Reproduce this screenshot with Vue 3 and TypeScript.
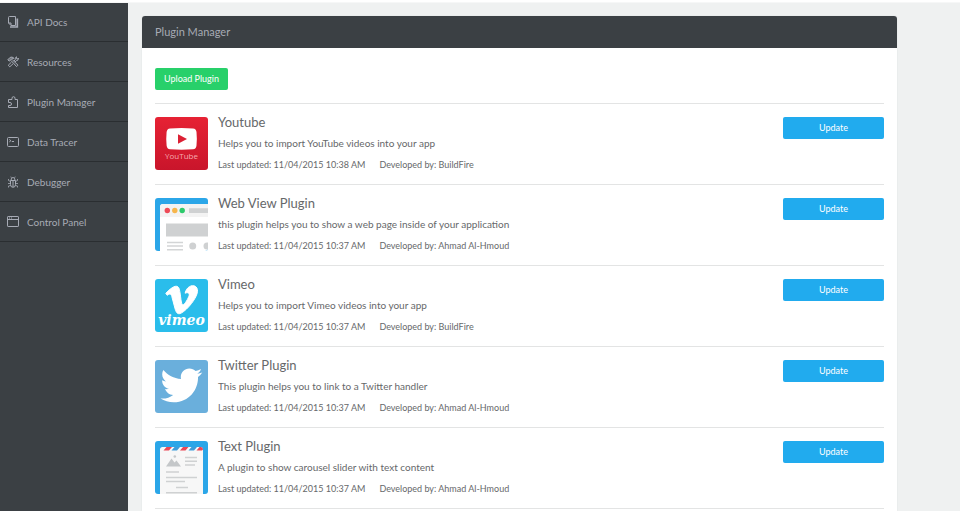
<script setup lang="ts">
type MenuIcon = 'docs' | 'tools' | 'puzzle' | 'terminal' | 'bug' | 'window'
type PluginIcon = 'youtube' | 'web' | 'vimeo' | 'twitter' | 'text'

interface MenuItem {
  label: string
  icon: MenuIcon
}

interface Plugin {
  name: string
  description: string
  updated: string
  author: string
  icon: PluginIcon
}

const menu: MenuItem[] = [
  { label: 'API Docs', icon: 'docs' },
  { label: 'Resources', icon: 'tools' },
  { label: 'Plugin Manager', icon: 'puzzle' },
  { label: 'Data Tracer', icon: 'terminal' },
  { label: 'Debugger', icon: 'bug' },
  { label: 'Control Panel', icon: 'window' },
]

const plugins: Plugin[] = [
  { name: 'Youtube', description: 'Helps you to import YouTube videos into your app', updated: '11/04/2015 10:38 AM', author: 'BuildFire', icon: 'youtube' },
  { name: 'Web View Plugin', description: 'this plugin helps you to show a web page inside of your application', updated: '11/04/2015 10:37 AM', author: 'Ahmad Al-Hmoud', icon: 'web' },
  { name: 'Vimeo', description: 'Helps you to import Vimeo videos into your app', updated: '11/04/2015 10:37 AM', author: 'BuildFire', icon: 'vimeo' },
  { name: 'Twitter Plugin', description: 'This plugin helps you to link to a Twitter handler', updated: '11/04/2015 10:37 AM', author: 'Ahmad Al-Hmoud', icon: 'twitter' },
  { name: 'Text Plugin', description: 'A plugin to show carousel slider with text content', updated: '11/04/2015 10:37 AM', author: 'Ahmad Al-Hmoud', icon: 'text' },
]
</script>

<template>
  <div class="page">
    <div class="topbar"></div>
    <div class="layout">
      <nav class="sidebar">
        <a v-for="item in menu" :key="item.label" href="#" class="menu-item">
          <svg class="menu-icon" viewBox="0 0 12 12" aria-hidden="true">
            <template v-if="item.icon === 'docs'">
              <path d="M3 11 H10.3 V2.500" stroke-width="1.700" />
              <path d="M2.500 .5 H8.500 V9.500 H4 L1.500 7 V1.500 Q1.500 .5 2.500 .5 Z M1.500 7 H4 V9.500" />
            </template>
            <template v-else-if="item.icon === 'tools'">
              <path d="M4 4.500 L9.600 10.600 L11 9.200 L5.200 3.600 M6.800 5.200 L8.200 3.800 Q7.500 1.800 9.500 .8 L9.300 2.600 L10.600 3 L11.400 2 Q11.600 4.800 9.200 4.800 L7.900 6.200 M4.400 6.200 L1.200 9.300 L2.800 10.800 L6 7.800" />
              <path d="M.8 3.800 L2.200 5.100 L5.800 2.200 L6.900 2.300 Q5.200 .3 3.100 1.400 Z" fill="#a7abb5" fill-opacity=".5" />
            </template>
            <template v-else-if="item.icon === 'puzzle'">
              <path d="M1.500 3.500 H5 V2.200 A1.500 1.500 0 0 1 8 2.200 V3.500 H10.500 V11.500 H1.500 V9.500 H3 A1.500 1.500 0 0 0 3 6.500 H1.500 Z" />
            </template>
            <template v-else-if="item.icon === 'terminal'">
              <rect x=".5" y="1.500" width="11" height="9" rx="1" />
              <path d="M2.300 3.500 L3.900 4.700 L2.300 5.900 M4.800 5.500 H7" />
            </template>
            <template v-else-if="item.icon === 'bug'">
              <path d="M3.500 4.500 H8.500 V8.500 Q8.500 11.300 6 11.300 Q3.500 11.300 3.500 8.500 Z M4 4.300 Q4 1.500 6 1.500 Q8 1.500 8 4.300 M6 5 V11" />
              <path d="M4.400 1.800 L3.800 .6 M7.600 1.800 L8.200 .6 M3.500 5.500 L1.500 4.500 V3 M8.500 5.500 L10.500 4.500 V3 M3.500 7.500 H1 M8.500 7.500 H11 M3.700 9.500 L1.500 10 V11.500 M8.300 9.500 L10.500 10 V11.500" stroke-width=".8" />
            </template>
            <template v-else>
              <rect x=".5" y=".5" width="11" height="10" rx=".6" />
              <path d="M.5 3.500 H11.500 M2 2 H3 M4 2 H5" />
            </template>
          </svg>
          <span>{{ item.label }}</span>
        </a>
      </nav>

      <main class="content">
        <section class="card">
          <h1 class="card-header">Plugin Manager</h1>
          <div class="card-body">
            <button type="button" class="btn upload">Upload Plugin</button>
            <ul class="plugins">
              <li v-for="plugin in plugins" :key="plugin.name" class="plugin">
                <svg class="plugin-icon" viewBox="0 0 53 53" aria-hidden="true">
                  <template v-if="plugin.icon === 'youtube'">
                    <defs>
                      <linearGradient id="yt-red" x1="0" y1="0" x2="0" y2="1">
                        <stop offset="0" stop-color="#e62234" />
                        <stop offset="1" stop-color="#c9152b" />
                      </linearGradient>
                    </defs>
                    <rect width="53" height="53" fill="url(#yt-red)" />
                    <path d="M15 11.4 Q26.500 10.600 38 11.400 Q41.200 11.700 41.500 15 Q42.200 22 41.500 28.500 Q41.200 32 38 32.300 Q26.500 33.200 15 32.300 Q12 32 11.600 28.500 Q10.900 22 11.600 15 Q12 11.700 15 11.400 Z" fill="#fff" />
                    <path d="M23 17.200 L32 22 L23 26.800 Z" fill="#dc2034" />
                    <text x="26.500" y="42" class="yt-word">YouTube</text>
                  </template>
                  <template v-else-if="plugin.icon === 'web'">
                    <rect width="53" height="53" fill="#2ba6e8" />
                    <path d="M5 53 V9 Q5 6 8 6 H53 V53 Z" fill="#fff" />
                    <path d="M5 19 V9 Q5 6 8 6 H53 V19 Z" fill="#f3f3f3" />
                    <circle cx="12.300" cy="12.500" r="2.700" fill="#ee4b58" />
                    <circle cx="19.800" cy="12.500" r="2.700" fill="#f7b64c" />
                    <circle cx="27.200" cy="12.500" r="2.700" fill="#2dca6c" />
                    <path d="M34 10.300 H53 V15 H34 Z M11 25.500 H53 V38.500 H11 Z" fill="#cfd1d2" />
                    <path d="M12 44.500 H28 M12 48 H28 M12 51.700 H28" stroke="#d3d5d6" stroke-width="1.500" />
                    <circle cx="37.700" cy="48" r="3.500" fill="#cfd1d2" />
                    <circle cx="52" cy="48" r="3.500" fill="#cfd1d2" />
                  </template>
                  <template v-else-if="plugin.icon === 'vimeo'">
                    <rect width="53" height="53" fill="#2abdeb" />
                    <path d="M10.800 14.300 L12.200 16.300 C14.500 14.700 15.800 14.400 16.800 17.500 L20.200 30.200 C21.400 34.300 23.200 35.700 26.200 34.100 C32.400 30.900 42.200 18.700 42.500 12.300 C42.900 4.300 32.200 4.700 30.100 14.200 C33.500 12.800 35.100 14.600 33.700 17.700 C32.200 21.200 29.100 26.600 27.500 25.700 C25.700 24.600 25.500 11.600 23.700 8.700 C21.700 5.500 17 7.700 10.800 14.300 Z" fill="#fff" stroke="#fff" />
                    <text x="26.500" y="46" class="vimeo-word">vimeo</text>
                  </template>
                  <template v-else-if="plugin.icon === 'twitter'">
                    <rect width="53" height="53" fill="#6aafdc" />
                    <g transform="translate(5.500 4.500) scale(1.740)">
                      <path d="M23.954 4.569c-.885.389-1.830.654-2.825.775 1.014-.611 1.794-1.574 2.163-2.723-.951.555-2.005.959-3.127 1.184-.896-.959-2.173-1.559-3.591-1.559-2.717 0-4.920 2.203-4.920 4.917 0 .390.045.765.127 1.124C7.691 8.094 4.066 6.130 1.640 3.161c-.427.722-.666 1.561-.666 2.475 0 1.710.870 3.213 2.188 4.096-.807-.026-1.566-.248-2.228-.616v.061c0 2.385 1.693 4.374 3.946 4.827-.413.111-.849.171-1.296.171-.314 0-.615-.030-.916-.086.631 1.953 2.445 3.377 4.604 3.417-1.680 1.319-3.809 2.105-6.102 2.105-.390 0-.779-.023-1.170-.067 2.189 1.394 4.768 2.209 7.557 2.209 9.054 0 13.999-7.496 13.999-13.986 0-.209 0-.420-.015-.630.961-.689 1.800-1.560 2.460-2.548z" fill="#fff" />
                    </g>
                  </template>
                  <template v-else>
                    <rect width="53" height="53" fill="#2ba6e8" />
                    <path d="M5 53 V8.500 Q5 6 7.500 6 H45.500 Q48 6 48 8.500 V53 Z" fill="#f7f7f7" />
                    <path d="M11.500 6 H17 L14 9.500 H8.500 Z M28 6 H33.500 L30.500 9.500 H25 Z M44.500 6 H45.500 Q48 6 48 8.500 L47 9.500 H41.500 Z" fill="#eb4856" />
                    <path d="M19.500 6 H25 L22 9.500 H16.500 Z M36.500 6 H42 L39 9.500 H33.500 Z" fill="#3d9ddb" />
                    <path d="M11 25.500 L16.500 17.500 L19.500 21.500 L21.500 19.500 L26 25.500 Z" fill="#c4c7c9" />
                    <circle cx="19.800" cy="15.500" r="1.300" fill="#c4c7c9" />
                    <path d="M30 16.500 H42 M30 20.200 H42 M30 24 H40 M11 31 H24 M11 36.500 H42 M11 40.500 H30 M21 46.500 H33 M11 51.700 H42" stroke="#cfd1d2" stroke-width="1.600" />
                  </template>
                </svg>
                <div class="info">
                  <h2 class="name">{{ plugin.name }}</h2>
                  <p class="description">{{ plugin.description }}</p>
                  <p class="meta">
                    <span>Last updated: {{ plugin.updated }}</span>
                    <span>Developed by: {{ plugin.author }}</span>
                  </p>
                </div>
                <button type="button" class="btn update">Update</button>
              </li>
            </ul>
          </div>
        </section>
      </main>
    </div>
  </div>
</template>

<style>
body {
  margin: 0;
  background: #eff1f1;
}
</style>

<style scoped>
.page {
  display: flex;
  flex-direction: column;
  min-height: 100vh;
  font-family: Lato, "Liberation Sans", sans-serif;
  font-size: 10px;
  color: #66686a;
}

.topbar {
  position: relative;
  height: 2px;
  background: #fff;
  box-shadow: 0 1px 0 #f6f7f7;
}

.layout {
  display: flex;
  flex: 1;
}

.sidebar {
  flex: 0 0 128px;
  background: #3b4044;
}

.menu-item {
  display: flex;
  align-items: center;
  gap: 8px;
  height: 39px;
  padding: 0 7px;
  border-bottom: 1px solid #2a2e31;
  color: #a7abb5;
  text-decoration: none;
}

.menu-icon {
  width: 12px;
  height: 12px;
  fill: none;
  stroke: #a7abb5;
  stroke-width: 1;
}

.content {
  display: flex;
  flex: 1;
  padding: 14px 63px 0 14px;
}

.card {
  display: flex;
  flex: 1;
  flex-direction: column;
  background: #fff;
  border-radius: 3px 3px 0 0;
  box-shadow: 0 0 1px #c4c7c9;
}

.card-header {
  margin: 0;
  padding: 0 13px;
  border-radius: 3px 3px 0 0;
  background: #3b4044;
  color: #a7abb5;
  font-size: 11px;
  font-weight: 400;
  line-height: 32px;
}

.card-body {
  padding: 20px 13px 0;
}

.btn {
  display: block;
  height: 22px;
  padding: 0 9px;
  border: 0;
  border-radius: 2px;
  color: #fff;
  font: inherit;
  font-size: 9px;
  line-height: 22px;
  cursor: pointer;
}

.upload {
  background: #28d06a;
}

.update {
  flex: 0 0 101px;
  align-self: flex-start;
  margin-top: 5px;
  background: #21abee;
}

.plugins {
  margin: 13px 0 0;
  padding: 0;
  border-bottom: 1px solid #e3e4e4;
  list-style: none;
}

.plugin {
  display: flex;
  align-items: center;
  gap: 10px;
  padding: 8px 0 9px;
  border-top: 1px solid #e3e4e4;
}

.plugin-icon {
  flex: none;
  width: 53px;
  height: 53px;
  border-radius: 3px;
}

.info {
  flex: 1;
  line-height: 21px;
}

.name {
  margin: 0;
  font-size: 13px;
  font-weight: 400;
}

.description,
.meta {
  margin: 0;
}

.meta {
  display: flex;
  gap: 14px;
  font-size: 9px;
}

.yt-word {
  fill: #f6a9b0;
  font-family: "Open Sans", sans-serif;
  font-size: 8px;
  text-anchor: middle;
}

.vimeo-word {
  fill: #fff;
  font-family: "DejaVu Serif", serif;
  font-size: 14px;
  font-style: italic;
  font-weight: 700;
  text-anchor: middle;
}
</style>
